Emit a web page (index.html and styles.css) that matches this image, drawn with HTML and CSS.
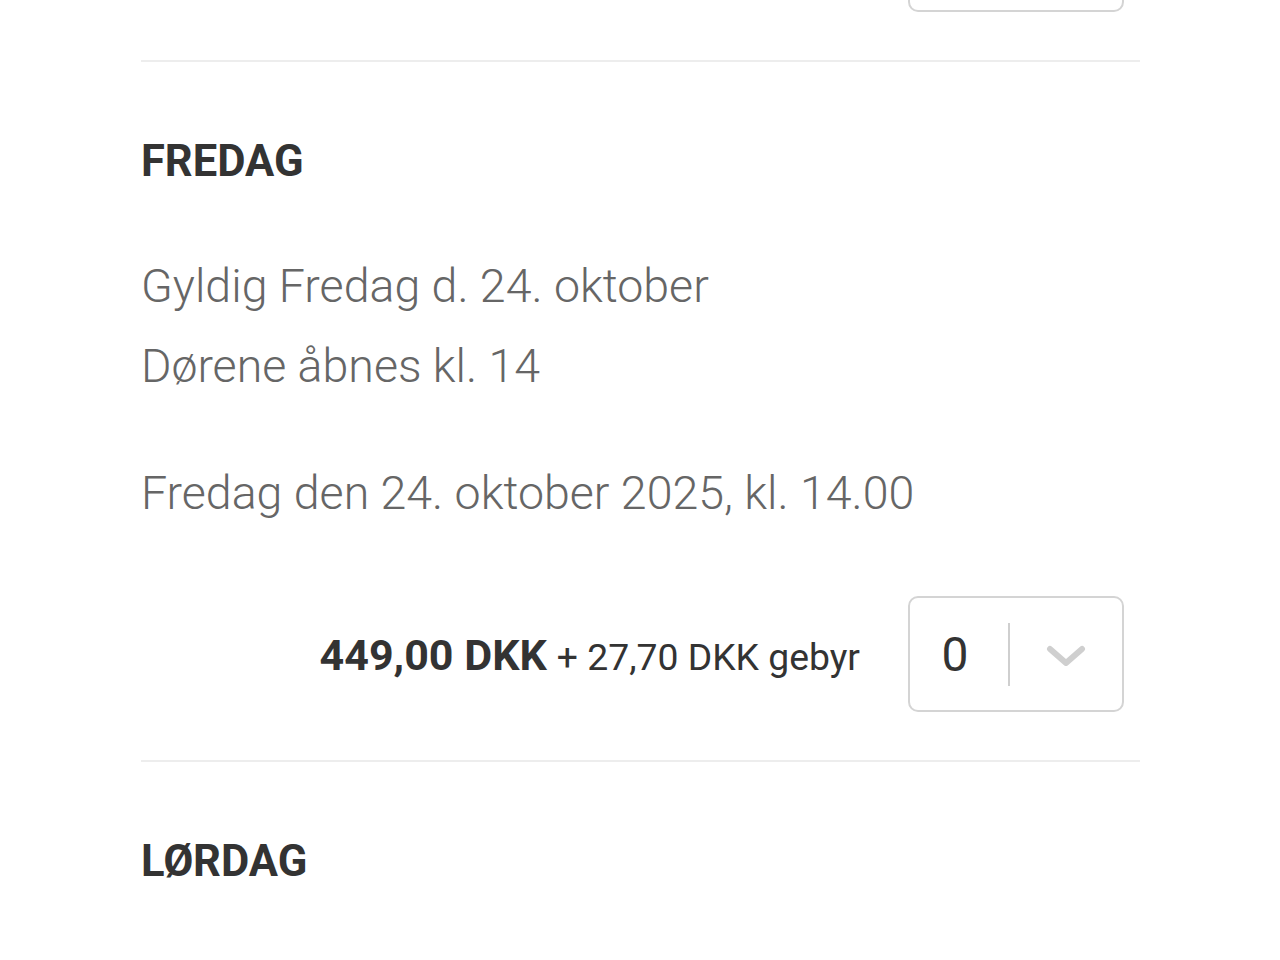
FILE: index.html
```html
<!DOCTYPE html>
<html lang="da">
<head>
<meta charset="utf-8">
<title>Billetter</title>
<link rel="stylesheet" href="styles.css">
</head>
<body>
<main class="tickets">
  <section class="ticket ticket-prev">
    <div class="price-row">
      <div class="qty">
        <span class="qty-value">0</span>
        <span class="qty-sep"></span>
        <svg class="qty-chev" viewBox="0 0 40 24" width="40" height="24"><path d="M4 5 L20 19 L36 5" fill="none" stroke="#cfcfcf" stroke-width="6" stroke-linecap="round" stroke-linejoin="round"/></svg>
      </div>
    </div>
  </section>
  <section class="ticket">
    <h2 class="ticket-title">FREDAG</h2>
    <p class="ticket-desc">Gyldig Fredag d. 24. oktober<br>Dørene åbnes kl. 14</p>
    <p class="ticket-date">Fredag den 24. oktober 2025, kl. 14.00</p>
    <div class="price-row">
      <div class="price"><strong class="price-main">449,00 DKK</strong><span class="price-fee">+ 27,70 DKK gebyr</span></div>
      <div class="qty">
        <span class="qty-value">0</span>
        <span class="qty-sep"></span>
        <svg class="qty-chev" viewBox="0 0 40 24" width="40" height="24"><path d="M4 5 L20 19 L36 5" fill="none" stroke="#cfcfcf" stroke-width="6" stroke-linecap="round" stroke-linejoin="round"/></svg>
      </div>
    </div>
  </section>
  <section class="ticket ticket-last">
    <h2 class="ticket-title">LØRDAG</h2>
  </section>
</main>
</body>
</html>
```
FILE: styles.css
```css
html, body {
  margin: 0;
  padding: 0;
  background: #ffffff;
}
body {
  font-family: Roboto, "Liberation Sans", Arial, sans-serif;
  color: #333333;
  overflow: hidden;
  height: 960px;
}
.tickets {
  width: 999px;
  margin-left: 141px;
  margin-top: -104px;
}
.ticket {
  border-bottom: 2px solid #ededed;
  padding-bottom: 48px;
}
.ticket-last {
  border-bottom: none;
}
.ticket-title {
  margin: 74px 0 0 0;
  font-size: 43.5px;
  line-height: 52px;
  font-weight: 700;
  color: #333333;
}
.ticket-desc {
  margin: 58px 0 0 0;
  font-size: 46.5px;
  line-height: 80px;
  font-weight: 300;
  color: #666666;
}
.ticket-date {
  margin: 47px 0 0 0;
  font-size: 46.5px;
  line-height: 80px;
  font-weight: 300;
  color: #666666;
}
.price-row {
  display: flex;
  justify-content: flex-end;
  align-items: center;
  gap: 48px;
  padding-right: 16px;
  margin-top: 63px;
}
.ticket-prev .price-row {
  margin-top: 0;
}
.price {
  white-space: nowrap;
  color: #333333;
  padding-top: 2px;
}
.price-main {
  font-size: 43px;
  font-weight: 700;
}
.price-fee {
  font-size: 37.3px;
  font-weight: 400;
  margin-left: 10px;
}
.qty {
  box-sizing: border-box;
  width: 216px;
  height: 116px;
  border: 2px solid #d4d4d4;
  border-radius: 10px;
  display: flex;
  align-items: center;
}
.qty-value {
  width: 94px;
  text-align: center;
  font-size: 48px;
  font-weight: 400;
  color: #333333;
  margin-left: -2px;
}
.qty-sep {
  width: 2px;
  height: 63px;
  background: #cfcfcf;
  margin-left: 6px;
}
.qty-chev {
  margin-left: 36px;
  margin-top: 4px;
}
```
